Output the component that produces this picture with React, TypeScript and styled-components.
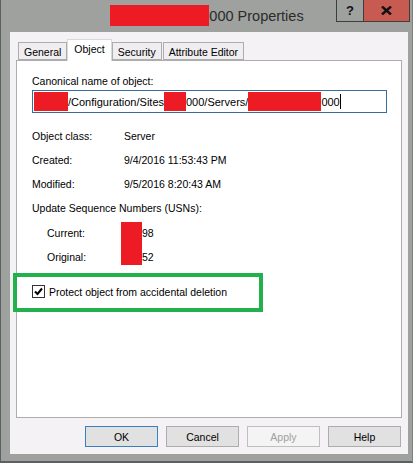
import styled, { createGlobalStyle } from "styled-components";

const GlobalStyle = createGlobalStyle`
  html, body {
    margin: 0;
    padding: 0;
    background: #9fa19e;
  }
  body {
    font-family: "Liberation Sans", Arial, sans-serif;
  }
`;

const StyledWindow = styled.div`
  width: 413px;
  height: 463px;
  box-sizing: border-box;
  background: #9fa19e;
  border-left: 1px solid #5d6063;
  border-right: 1px solid #7d807f;
  border-bottom: 2px solid #5d6063;
  display: flex;
  flex-direction: column;
`;

const StyledTitleBar = styled.div`
  height: 32px;
  display: grid;
  grid-template-columns: 1fr auto 1fr;
  align-items: start;
`;

const StyledTitle = styled.div`
  grid-column: 2;
  display: flex;
  align-items: center;
  height: 21px;
  margin-top: 5px;
  font-size: 14.5px;
  color: #2a2a2a;
  margin-left: 1px;
`;

const StyledRedact = styled.span<{ $w: number; $h: number }>`
  display: inline-block;
  width: ${(p) => p.$w}px;
  height: ${(p) => p.$h}px;
  background: #ed1c24;
  flex-shrink: 0;
`;

const StyledCaption = styled.div`
  grid-column: 3;
  justify-self: end;
  display: flex;
  margin-right: 2px;
`;

const StyledCaptionButton = styled.div<{ $close?: boolean }>`
  width: ${(p) => (p.$close ? 47 : 28)}px;
  height: 22px;
  box-sizing: border-box;
  border: 1px solid #3e3e3e;
  border-top: none;
  margin-left: ${(p) => (p.$close ? -1 : 0)}px;
  background: ${(p) => (p.$close ? "#c75a51" : "#9fa19e")};
  display: flex;
  align-items: center;
  justify-content: center;
  font-family: "Liberation Sans", Arial, sans-serif;
  font-weight: bold;
  font-size: 13px;
  color: #111;
`;

const StyledClient = styled.div`
  margin: 0 4px 0 9px;
  height: 422px;
  background: #f5f2f6;
  display: flex;
  flex-direction: column;
  padding: 7px 6px 0 6px;
  box-sizing: border-box;
  font-size: 10.5px;
  color: #000;
`;

const StyledTabs = styled.div`
  display: flex;
  align-items: flex-end;
  padding-left: 2px;
  height: 21px;
  position: relative;
  z-index: 1;
`;

const StyledTab = styled.div<{ $active?: boolean }>`
  height: ${(p) => (p.$active ? 22 : 18)}px;
  box-sizing: border-box;
  padding: 0 ${(p) => (p.$active ? 6 : 5)}px;
  border: 1px solid ${(p) => (p.$active ? "#d9d9d9" : "#adadad")};
  border-bottom: ${(p) => (p.$active ? "none" : "1px solid #adadad")};
  background: ${(p) => (p.$active ? "#ffffff" : "#f0eef1")};
  display: flex;
  align-items: center;
  margin-right: ${(p) => (p.$active ? 0 : 1)}px;
  margin-left: ${(p) => (p.$active ? -1 : 0)}px;
  margin-bottom: ${(p) => (p.$active ? -1 : 0)}px;
  padding-top: ${(p) => (p.$active ? 0 : 1)}px;
  padding-bottom: ${(p) => (p.$active ? 3 : 0)}px;
  white-space: nowrap;
`;

const StyledPanel = styled.div`
  height: 358px;
  box-sizing: border-box;
  background: #ffffff;
  border: 1px solid #adadad;
  padding: 13px 14px 0 15px;
  display: flex;
  flex-direction: column;
`;

const StyledLabel = styled.div`
  line-height: 14px;
  white-space: nowrap;
`;

const StyledInput = styled.div`
  margin-top: 2px;
  height: 23px;
  box-sizing: border-box;
  border: 1px solid #3a6d9b;
  background: #fff;
  display: flex;
  align-items: center;
  padding-left: 1px;
  white-space: nowrap;
  font-size: 11px;
`;

const StyledCaret = styled.span`
  display: inline-block;
  width: 1px;
  height: 15px;
  background: #000;
`;

const StyledInfo = styled.div`
  margin-top: 11px;
  display: flex;
  flex-direction: column;
`;

const StyledInfoRow = styled.div<{ $indent?: boolean }>`
  height: 24px;
  display: grid;
  grid-template-columns: ${(p) => (p.$indent ? "74px" : "92px")} auto;
  align-items: center;
  padding-left: ${(p) => (p.$indent ? 15 : 0)}px;
  white-space: nowrap;
`;

const StyledUsn = styled.div`
  display: grid;
  grid-template-columns: 74px 21px auto;
  grid-template-rows: 24px 24px;
  align-items: center;
  padding-left: 15px;
  margin-top: 1px;
  white-space: nowrap;
`;

const StyledUsnBlock = styled.div`
  grid-column: 2;
  grid-row: 1 / span 2;
  align-self: stretch;
  margin: 1px 0 4px;
  background: #ed1c24;
`;

const StyledHighlight = styled.div`
  margin: 4px 0 0 -19px;
  width: 250px;
  height: 39px;
  box-sizing: border-box;
  border: 4px solid #22b14c;
  display: flex;
  align-items: center;
  padding: 0 0 2px 15px;
  gap: 4px;
  white-space: nowrap;
`;

const StyledCheckbox = styled.div`
  width: 13px;
  height: 13px;
  box-sizing: border-box;
  border: 1px solid #333;
  background: #fff;
  display: flex;
  align-items: center;
  justify-content: center;
  flex-shrink: 0;
`;

const StyledButtonRow = styled.div`
  display: flex;
  justify-content: flex-end;
  gap: 8px;
  margin-top: 8px;
  padding-right: 1px;
`;

const StyledButton = styled.div<{ $variant?: "default" | "disabled" }>`
  width: 73px;
  height: 21px;
  box-sizing: border-box;
  border: 1px solid
    ${(p) =>
      p.$variant === "default"
        ? "#3c7fc0"
        : p.$variant === "disabled"
          ? "#bfbfbf"
          : "#adadad"};
  background: ${(p) => (p.$variant === "disabled" ? "#f4f4f4" : "#e1e1e1")};
  color: ${(p) => (p.$variant === "disabled" ? "#a0a0a0" : "#000")};
  display: flex;
  align-items: center;
  justify-content: center;
`;

const App = () => {
  return (
    <>
      <GlobalStyle />
      <StyledWindow>
        <StyledTitleBar>
          <StyledTitle>
            <StyledRedact $w={99} $h={21} />
            000 Properties
          </StyledTitle>
          <StyledCaption>
            <StyledCaptionButton>?</StyledCaptionButton>
            <StyledCaptionButton $close>
              <svg width="11" height="9" viewBox="0 0 11 9">
                <path d="M1 0.5 L10 8.5 M10 0.5 L1 8.5" stroke="#111" strokeWidth="2.4" />
              </svg>
            </StyledCaptionButton>
          </StyledCaption>
        </StyledTitleBar>
        <StyledClient>
          <StyledTabs>
            <StyledTab>General</StyledTab>
            <StyledTab $active>Object</StyledTab>
            <StyledTab>Security</StyledTab>
            <StyledTab>Attribute Editor</StyledTab>
          </StyledTabs>
          <StyledPanel>
            <StyledLabel>Canonical name of object:</StyledLabel>
            <StyledInput>
              <StyledRedact $w={34} $h={19} />
              /Configuration/Sites
              <StyledRedact $w={22} $h={19} />
              000/Servers/
              <StyledRedact $w={73} $h={19} />
              000
              <StyledCaret />
            </StyledInput>
            <StyledInfo>
              <StyledInfoRow>
                <span>Object class:</span>
                <span>Server</span>
              </StyledInfoRow>
              <StyledInfoRow>
                <span>Created:</span>
                <span>9/4/2016 11:53:43 PM</span>
              </StyledInfoRow>
              <StyledInfoRow>
                <span>Modified:</span>
                <span>9/5/2016 8:20:43 AM</span>
              </StyledInfoRow>
              <StyledInfoRow>
                <span>Update Sequence Numbers (USNs):</span>
              </StyledInfoRow>
              <StyledUsn>
                <span>Current:</span>
                <StyledUsnBlock />
                <span>98</span>
                <span>Original:</span>
                <span>52</span>
              </StyledUsn>
            </StyledInfo>
            <StyledHighlight>
              <StyledCheckbox>
                <svg width="9" height="9" viewBox="0 0 9 9">
                  <path d="M1 4.5 L3.5 7 L8 1.5" stroke="#000" strokeWidth="2" fill="none" />
                </svg>
              </StyledCheckbox>
              <span>Protect object from accidental deletion</span>
            </StyledHighlight>
          </StyledPanel>
          <StyledButtonRow>
            <StyledButton $variant="default">OK</StyledButton>
            <StyledButton>Cancel</StyledButton>
            <StyledButton $variant="disabled">Apply</StyledButton>
            <StyledButton>Help</StyledButton>
          </StyledButtonRow>
        </StyledClient>
      </StyledWindow>
    </>
  );
};

export default App;
